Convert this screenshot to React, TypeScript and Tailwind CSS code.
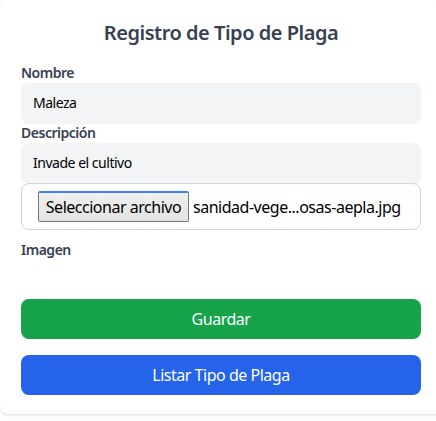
export default function App() {
  const font = { fontFamily: '"Noto Sans", "Open Sans", sans-serif' };
  return (
    <div className="w-full overflow-hidden bg-white h-[421px] tracking-[-0.03em]" style={font}>
      <div className="w-[442px] bg-white rounded-lg shadow-[0_1px_3px_rgba(0,0,0,0.15)] px-[21px] pt-[19px] pb-[19px]">
        <h2 className="text-xl leading-7 font-semibold text-[#374151] text-center mb-4">
          Registro de Tipo de Plaga
        </h2>
        <label className="block text-sm leading-5 font-semibold text-[#374151]">Nombre</label>
        <div className="h-10 rounded-lg bg-[#f3f4f6] shadow-[0_1px_2px_rgba(0,0,0,0.05)] px-3 flex items-center text-sm text-black">
          Maleza
        </div>
        <label className="block text-sm leading-5 font-semibold text-[#374151]">Descripción</label>
        <div className="h-10 rounded-lg bg-[#f3f4f6] shadow-[0_1px_2px_rgba(0,0,0,0.05)] px-3 flex items-center text-sm text-black">
          Invade el cultivo
        </div>
        <div className="h-[47px] rounded-lg border border-[#d1d5db] pl-4 flex items-center text-base text-black">
          <span className="w-[151px] h-[31px] flex items-center justify-center border border-[#767676] border-t-[#3b82f6] border-t-2 bg-gradient-to-b from-[#f0f0f0] to-[#e3e3e3] rounded-[2px] mr-1 whitespace-nowrap">
            Seleccionar archivo
          </span>
          <span className="whitespace-nowrap">sanidad-vege...osas-aepla.jpg</span>
        </div>
        <label className="block text-sm leading-5 font-semibold text-[#374151] mt-[10px]">Imagen</label>
        <button className="mt-[39px] w-full h-10 rounded-lg bg-[#16a34a] text-white text-base flex items-center justify-center">
          Guardar
        </button>
        <button className="mt-4 w-full h-10 rounded-lg bg-[#2563eb] text-white text-base flex items-center justify-center">
          Listar Tipo de Plaga
        </button>
      </div>
    </div>
  );
}
